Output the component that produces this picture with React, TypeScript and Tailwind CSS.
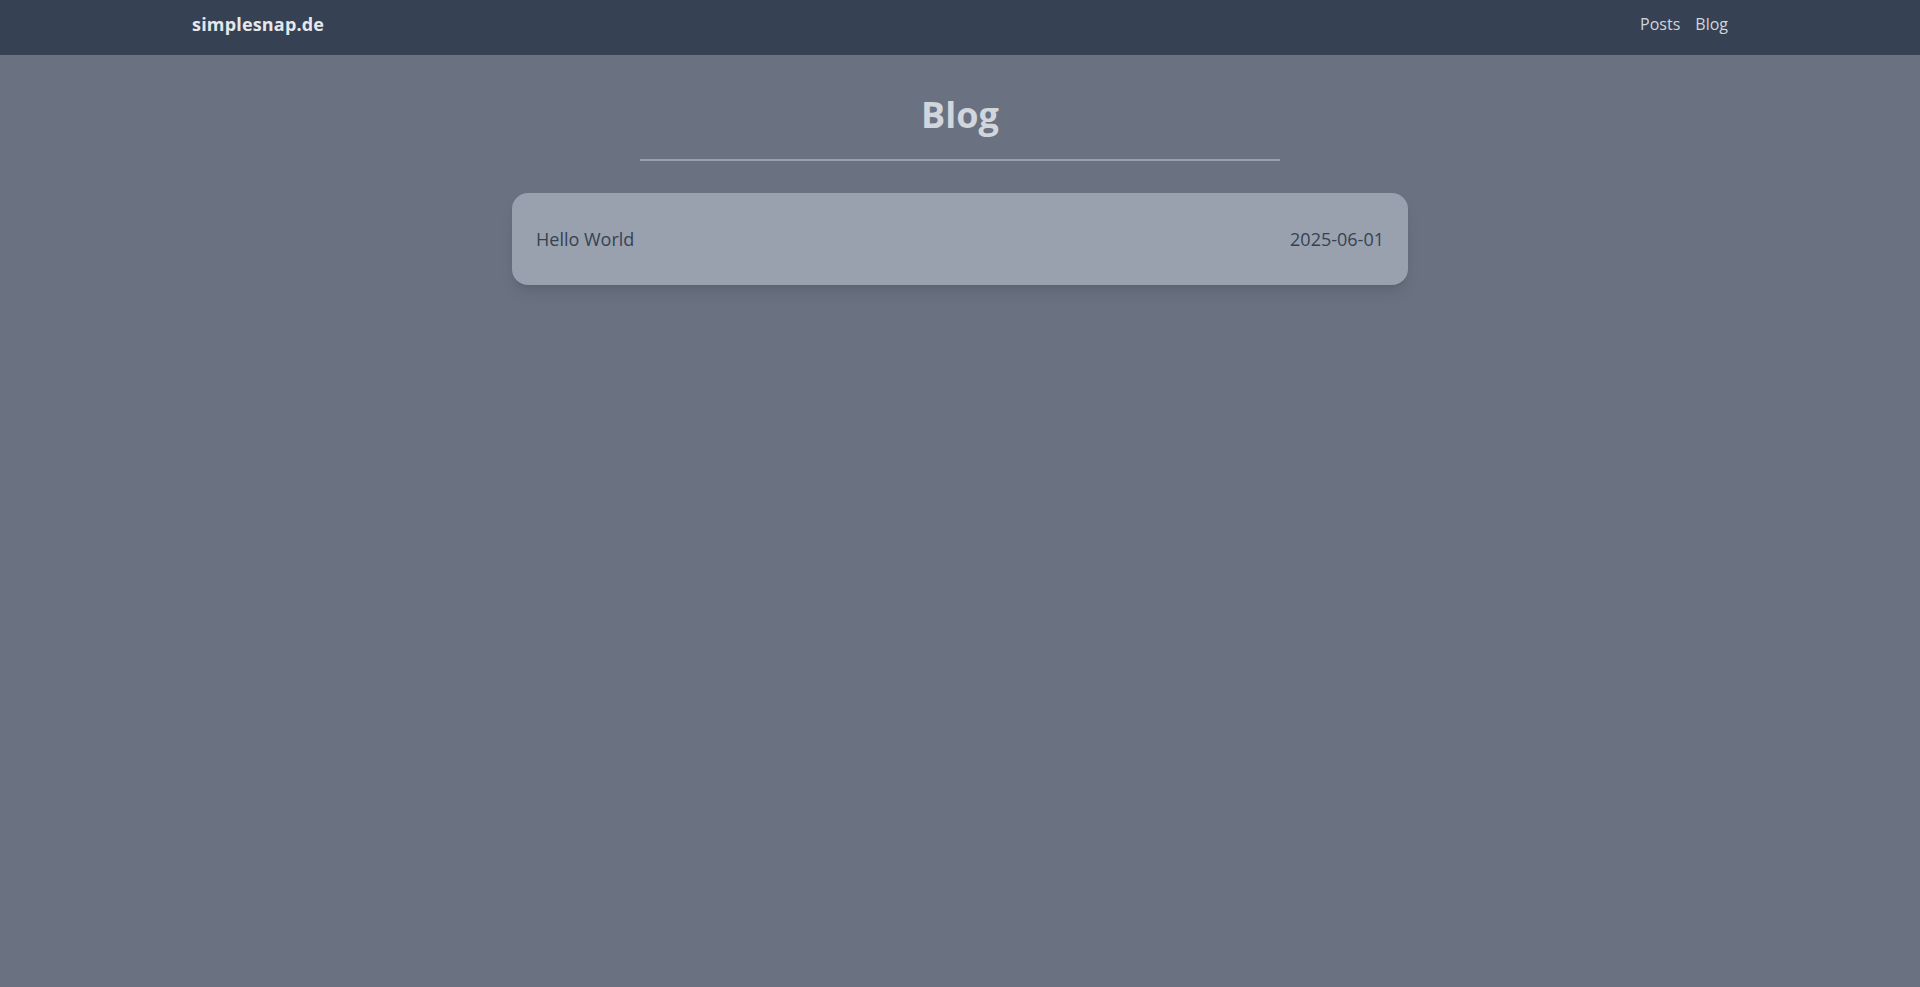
import React from 'react';

interface Post {
  title: string;
  date: string;
}

const posts: Post[] = [{ title: 'Hello World', date: '2025-06-01' }];

const Header: React.FC = () => (
  <header className="bg-gray-700 h-[55px]">
    <div className="container mx-auto h-full flex items-center justify-between pb-2">
      <a href="#" className="text-lg font-bold text-gray-200 tracking-[0.01em]">
        simplesnap.de
      </a>
      <nav className="flex items-center gap-[15px] text-gray-300">
        <a href="#">Posts</a>
        <a href="#">Blog</a>
      </nav>
    </div>
  </header>
);

const PostCard: React.FC<{ post: Post }> = ({ post }) => (
  <a
    href="#"
    className="flex items-center justify-between bg-gray-400 rounded-2xl shadow-lg px-6 py-8 text-lg text-gray-700"
  >
    <span>{post.title}</span>
    <span>{post.date}</span>
  </a>
);

export default function App() {
  return (
    <div className="min-h-screen bg-gray-500 font-['Open_Sans',sans-serif]">
      <Header />
      <main className="pt-10 px-4">
        <h1 className="text-4xl font-bold text-gray-300 text-center">Blog</h1>
        <div className="w-[640px] mx-auto mt-6 h-0.5 bg-gray-400" />
        <div className="max-w-4xl mx-auto mt-8 flex flex-col gap-4">
          {posts.map((p) => (
            <PostCard key={p.title} post={p} />
          ))}
        </div>
      </main>
    </div>
  );
}
